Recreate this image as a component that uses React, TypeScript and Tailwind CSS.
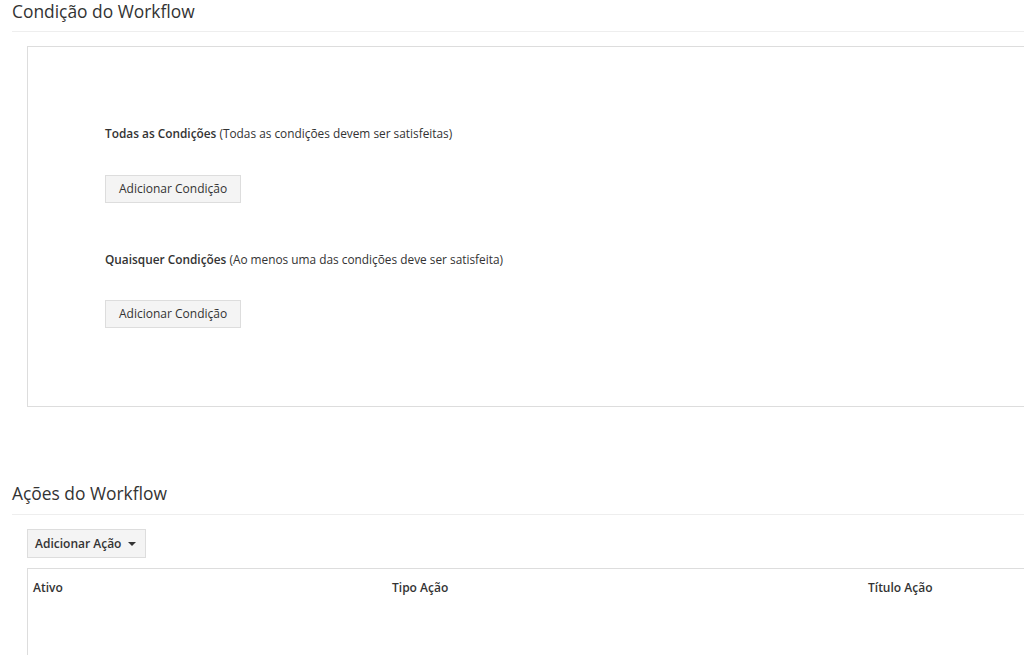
export default function App() {
  return (
    <div
      className="h-[655px] w-[1024px] overflow-hidden bg-white text-[#333]"
      style={{ fontFamily: '"Open Sans", sans-serif' }}
    >
      <div className="pl-3">
        <h3 className="text-[17.4px] leading-[22px]">Condição do Workflow</h3>
        <div className="mt-[9px] border-b border-[#eee]" />

        <div className="ml-[15px] mt-[14px] mr-[-10px] h-[361px] border border-[#ddd] pl-[77px] pt-[76px]">
          <p className="text-[11.85px] leading-[20px]">
            <span className="font-semibold">Todas as Condições</span> (Todas as condições devem ser satisfeitas)
          </p>
          <button className="mt-[32px] h-[28px] border border-[#ddd] bg-[#f4f4f4] px-[13px] text-[12px]">
            Adicionar Condição
          </button>

          <p className="mt-[46px] text-[11.85px] leading-[20px]">
            <span className="font-semibold">Quaisquer Condições</span> (Ao menos uma das condições deve ser satisfeita)
          </p>
          <button className="mt-[31px] h-[28px] border border-[#ddd] bg-[#f4f4f4] px-[13px] text-[12px]">
            Adicionar Condição
          </button>
        </div>

        <h3 className="mt-[75px] text-[17.4px] leading-[22px]">Ações do Workflow</h3>
        <div className="mt-[10px] border-b border-[#eee]" />

        <div className="ml-[15px] mt-[14px]">
          <button className="flex h-[29px] items-center gap-[7px] border border-[#ddd] bg-[#f4f4f4] pl-[7px] pr-[9px] text-[12px] font-semibold">
            Adicionar Ação
            <span className="h-0 w-0 border-x-[4px] border-t-[4px] border-x-transparent border-t-[#333]" />
          </button>

          <div className="mt-[10px] mr-[-10px] h-[120px] border border-[#ddd]">
            <table className="w-full text-left text-[12px]">
              <thead>
                <tr>
                  <th className="w-[359px] px-[5px] pt-[10px] font-semibold">Ativo</th>
                  <th className="w-[476px] px-[5px] pt-[10px] font-semibold">Tipo Ação</th>
                  <th className="px-[5px] pt-[10px] font-semibold">Título Ação</th>
                </tr>
              </thead>
            </table>
          </div>
        </div>
      </div>
    </div>
  );
}
